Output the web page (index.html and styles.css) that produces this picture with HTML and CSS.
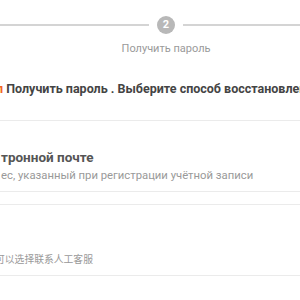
FILE: index.html
```html
<!DOCTYPE html>
<html lang="ru">
<head>
  <meta charset="UTF-8">
  <meta name="viewport" content="width=device-width, initial-scale=1.0">
  <title>Получить пароль</title>
  <link rel="stylesheet" href="styles.css">
</head>
<body>
  <div id="page">
    <div class="progress">
      <div class="bar bar-left"></div>
      <div class="step">
        <div class="num">2</div>
        <div class="step-label">Получить пароль</div>
      </div>
      <div class="bar bar-right"></div>
    </div>

    <p class="notice"><span class="accent">п</span> Получить пароль . Выберите способ восстановления</p>

    <div class="method">
      <div class="method-title">тронной почте</div>
      <div class="method-desc">ес, указанный при регистрации учётной записи</div>
    </div>

    <div class="method">
      <div class="method-title"></div>
      <div class="method-desc cjk">可以选择联系人工客服</div>
    </div>
  </div>
</body>
</html>
```

FILE: styles.css
```css
body {
  margin: 0;
  font-family: Roboto, "Noto Sans CJK SC", sans-serif;
  background: #fff;
  overflow: hidden;
}
#page {
  width: 300px;
  overflow: hidden;
}
.progress {
  display: flex;
  align-items: flex-start;
  padding-top: 16px;
}
.bar {
  height: 2px;
  background: #d4d4d4;
  margin-top: 8px;
}
.bar-left {
  width: 149px;
}
.bar-right {
  flex: 1;
}
.step {
  width: 34px;
  display: flex;
  flex-direction: column;
  align-items: center;
}
.num {
  width: 18px;
  height: 18px;
  border-radius: 50%;
  background: #b8b8b8;
  color: #fff;
  font-size: 11px;
  font-weight: bold;
  line-height: 18px;
  text-align: center;
}
.step-label {
  margin-top: 7px;
  font-size: 11px;
  line-height: 15px;
  color: #9a9a9a;
  white-space: nowrap;
}
.notice {
  margin: 24px 0 0 -4px;
  font-size: 12.5px;
  line-height: 18px;
  font-weight: bold;
  color: #444;
  white-space: nowrap;
}
.accent {
  color: #f26522;
}
.method {
  margin: 22px -10px 0 -10px;
  height: 70px;
  border: 1px solid #ebebeb;
  padding: 0 0 0 10px;
}
.method + .method {
  margin-top: 12px;
}
.method-title {
  margin-top: 26px;
  height: 20px;
  font-size: 13.5px;
  line-height: 20px;
  font-weight: bold;
  color: #555;
  white-space: nowrap;
}
.method-desc {
  margin-top: 1px;
  font-size: 11.3px;
  line-height: 16px;
  color: #999;
  white-space: nowrap;
}
.cjk {
  margin-left: -6px;
  font-size: 9.8px;
}
```
